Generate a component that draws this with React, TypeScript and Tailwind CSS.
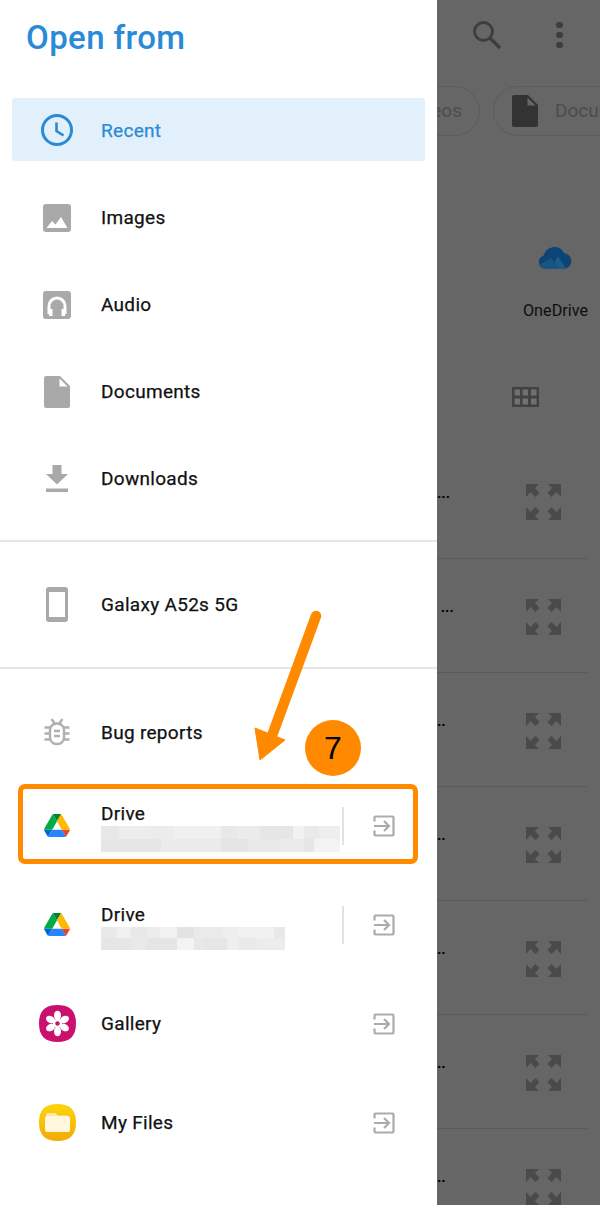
import type { ReactNode } from 'react'

const blurOne: [number, string][][] = [
  [[18, 'bg-[#e8e8e8]'], [29, 'bg-[#ededed]'], [25, 'bg-[#ececec]'], [48, 'bg-[#f0f0f0]'], [16, 'bg-[#e8e8e8]'], [23, 'bg-[#ebebeb]'], [33, 'bg-[#e6e6e6]'], [11, 'bg-[#f2f2f2]'], [15, 'bg-[#eaeaea]'], [21, 'bg-[#eeeeee]']],
  [[60, 'bg-[#e6e6e6]'], [60, 'bg-[#ebebeb]'], [27, 'bg-[#e4e4e4]'], [32, 'bg-[#e9e9e9]'], [24, 'bg-[#ebebeb]'], [10, 'bg-[#e6e6e6]'], [26, 'bg-[#f3f3f3]']],
]

const blurTwo: [number, string][][] = [
  [[16, 'bg-[#e9e9e9]'], [14, 'bg-[#f0f0f0]'], [16, 'bg-[#e8e8e8]'], [13, 'bg-[#ececec]'], [17, 'bg-[#f2f2f2]'], [17, 'bg-[#e3e3e3]'], [28, 'bg-[#eaeaea]'], [17, 'bg-[#eeeeee]'], [35, 'bg-[#f1f1f1]'], [11, 'bg-[#e8e8e8]']],
  [[30, 'bg-[#e6e6e6]'], [16, 'bg-[#e9e9e9]'], [30, 'bg-[#e5e5e5]'], [17, 'bg-[#f3f3f3]'], [11, 'bg-[#e8e8e8]'], [22, 'bg-[#e6e6e6]'], [12, 'bg-[#eeeeee]'], [18, 'bg-[#e9e9e9]'], [28, 'bg-[#ececec]']],
]

function BlurredText({ rows, rowClass }: { rows: [number, string][][]; rowClass: string }) {
  return (
    <div className="flex flex-col">
      {rows.map((row, i) => (
        <div key={i} className={`flex ${rowClass}`}>
          {row.map(([w, color], j) => (
            <div key={j} className={color} style={{ width: w }} />
          ))}
        </div>
      ))}
    </div>
  )
}

function ClockIcon() {
  return (
    <svg width="34" height="34" viewBox="0 0 34 34" fill="none" stroke="#2a8ad6" strokeWidth="3">
      <circle cx="17" cy="17" r="14.5" />
      <path d="M16.5 9.5v8.5l7 4.5" strokeWidth="2.6" />
    </svg>
  )
}

function ImageIcon() {
  return (
    <svg width="28" height="28" viewBox="0 0 28 28">
      <rect width="28" height="28" rx="3" fill="#a9a9a9" />
      <path d="M3.5 24l5.5-7 3.5 3.5L18 13l6.5 11z" fill="#fff" />
    </svg>
  )
}

function AudioIcon() {
  return (
    <svg width="28" height="28" viewBox="0 0 28 28">
      <rect width="28" height="28" rx="3" fill="#a9a9a9" />
      <path d="M6 23v-8a8 8 0 0 1 16 0v8" fill="none" stroke="#fff" strokeWidth="3" />
      <rect x="6" y="18" width="3.5" height="7" fill="#fff" />
      <rect x="18.5" y="18" width="3.5" height="7" fill="#fff" />
    </svg>
  )
}

function DocIcon({ fill = '#a9a9a9', fold = '#fff' }: { fill?: string; fold?: string }) {
  return (
    <svg width="26" height="32" viewBox="0 0 26 32">
      <path d="M2 0h14l10 10v20a2 2 0 0 1-2 2H2a2 2 0 0 1-2-2V2a2 2 0 0 1 2-2z" fill={fill} />
      <path d="M15.5 2.5L23.5 10.5H15.5z" fill={fold} />
    </svg>
  )
}

function DownloadIcon() {
  return (
    <svg width="22" height="27" viewBox="0 0 22 27" fill="#a9a9a9">
      <path d="M6.5 0h9v9H22L11 19.5 0 9h6.5z" />
      <rect y="23.5" width="22" height="3.5" />
    </svg>
  )
}

function PhoneIcon() {
  return (
    <svg width="22" height="35" viewBox="0 0 22 35">
      <rect width="22" height="35" rx="3" fill="#a9a9a9" />
      <rect x="3" y="5" width="16" height="25" fill="#fff" />
    </svg>
  )
}

function BugIcon() {
  return (
    <svg width="26" height="28" viewBox="0 0 26 28" fill="none" stroke="#b0b0b0" strokeWidth="2.4">
      <rect x="6" y="5.5" width="14" height="20.5" rx="6.5" />
      <path d="M7.5 1l3.5 5M18.5 1L15 6M0.5 9.5h5.5M20 9.5h5.5M0.5 15.5h5.5M20 15.5h5.5M0.5 21.5h5.5M20 21.5h5.5M10 13h6M10 18h6" />
    </svg>
  )
}

function DriveIcon() {
  return (
    <svg width="26" height="23" viewBox="0 0 87.3 78">
      <path d="m6.6 66.85 3.85 6.65c.8 1.4 1.95 2.5 3.3 3.3l13.75-23.8h-27.5c0 1.55.4 3.1 1.2 4.5z" fill="#0066da" />
      <path d="m43.65 25-13.75-23.8c-1.35.8-2.5 1.9-3.3 3.3l-25.4 44a9.06 9.06 0 0 0 -1.2 4.5h27.5z" fill="#00ac47" />
      <path d="m73.55 76.8c1.35-.8 2.5-1.9 3.3-3.3l1.6-2.75 7.65-13.25c.8-1.4 1.2-2.95 1.2-4.5h-27.502l5.852 11.5z" fill="#ea4335" />
      <path d="m43.65 25 13.75-23.8c-1.35-.8-2.9-1.2-4.5-1.2h-18.5c-1.6 0-3.15.45-4.5 1.2z" fill="#00832d" />
      <path d="m59.8 53h-32.3l-13.75 23.8c1.35.8 2.9 1.2 4.5 1.2h50.8c1.6 0 3.15-.45 4.5-1.2z" fill="#2684fc" />
      <path d="m73.4 26.5-12.7-22c-.8-1.4-1.95-2.5-3.3-3.3l-13.75 23.8 16.15 28h27.45c0-1.55-.4-3.1-1.2-4.5z" fill="#ffba00" />
    </svg>
  )
}

function GalleryIcon() {
  return (
    <svg width="37" height="37" viewBox="0 0 37 37">
      <path d="M18.5 0C31 0 37 6 37 18.5S31 37 18.5 37 0 31 0 18.5 6 0 18.5 0z" fill="#cb0f6f" />
      {[0, 60, 120, 180, 240, 300].map((a) => (
        <ellipse key={a} cx="18.5" cy="10.5" rx="3.5" ry="4.8" fill="#fff" transform={`rotate(${a} 18.5 18.5)`} />
      ))}
      <circle cx="18.5" cy="18.5" r="4.5" fill="#fff" />
      <circle cx="18.5" cy="18.5" r="2.2" fill="#cb0f6f" />
    </svg>
  )
}

function FilesIcon() {
  return (
    <svg width="37" height="37" viewBox="0 0 37 37">
      <defs>
        <linearGradient id="filesBg" x1="0" y1="0" x2="0" y2="1">
          <stop offset="0" stopColor="#fdd50a" />
          <stop offset="1" stopColor="#f0ab08" />
        </linearGradient>
      </defs>
      <path d="M18.5 0C31 0 37 6 37 18.5S31 37 18.5 37 0 31 0 18.5 6 0 18.5 0z" fill="url(#filesBg)" />
      <path d="M7 11a2 2 0 0 1 2-2h7l3 2.5h9a2 2 0 0 1 2 2V14H7z" fill="#fdeaa8" />
      <rect x="6" y="12" width="25" height="16" rx="2" fill="#fff6dc" />
    </svg>
  )
}

function ExitIcon() {
  return (
    <svg width="22" height="22" viewBox="0 0 22 22" fill="none" stroke="#ababab" strokeWidth="2.2">
      <path d="M1.5 6.5V2.5a1 1 0 0 1 1-1h17a1 1 0 0 1 1 1v17a1 1 0 0 1-1 1h-17a1 1 0 0 1-1-1v-4" />
      <path d="M1 11h15M11 6l5 5-5 5" />
    </svg>
  )
}

function ExpandIcon() {
  return (
    <svg width="35" height="36" viewBox="0 0 35 36" fill="#4a4a4a">
      <path d="M0 0h13L9 4l4.500 5-4 4L4.500 8 0 13z" />
      <path d="M35 0H22l4 4-4.500 5 4 4 5-5 4.500 5z" />
      <path d="M0 36h13l-4-4 4.500-5-4-4-5 5L0 23z" />
      <path d="M35 36H22l4-4-4.500-5 4-4 5 5 4.500-5z" />
    </svg>
  )
}

function MenuRow({ icon, label, active }: { icon: ReactNode; label: string; active?: boolean }) {
  return (
    <div className={active ? 'h-[88px] px-3 pt-3 pb-[13px]' : 'h-[87px] p-3'}>
      <div className={`flex h-full items-center rounded-[3px] ${active ? 'bg-[#e2f0fb] text-[#2a8ad6]' : 'text-[#111]'}`}>
        <div className="flex w-[90px] shrink-0 justify-center">{icon}</div>
        <span className={`-ml-px text-[19px] leading-none tracking-[0.3px] [-webkit-text-stroke:0.25px] ${active ? 'mt-px' : ''}`}>{label}</span>
      </div>
    </div>
  )
}

function AppRow({ icon, label, sub }: { icon: ReactNode; label: string; sub?: ReactNode }) {
  return (
    <div className="ml-3 mr-[13px] flex h-[99px] items-center">
      <div className="flex w-[90px] shrink-0 justify-center">{icon}</div>
      <div className={`-ml-px min-w-0 flex-1 text-[#111] ${sub ? 'mt-[3px]' : ''}`}>
        <div className="text-[19px] leading-[24px] tracking-[0.3px] [-webkit-text-stroke:0.25px]">{label}</div>
        {sub}
      </div>
      {sub && <div className="h-[38px] w-[2px] bg-[#e2e2e2]" />}
      <div className="flex w-[80px] shrink-0 justify-center">
        <ExitIcon />
      </div>
    </div>
  )
}

function BackdropRow({ dots, first }: { dots: string; first?: boolean }) {
  return (
    <div className={`mr-[13px] flex h-[114px] items-center ${first ? '' : 'border-t border-[#5a5a5a]'}`}>
      <span className="mb-[17px] whitespace-pre text-[15px] font-bold leading-[18px] text-black">{dots}</span>
      <div className="ml-auto mr-[26px] mt-[2px]">
        <ExpandIcon />
      </div>
    </div>
  )
}

export default function App() {
  return (
    <div className="relative flex h-[1205px] w-[600px] overflow-hidden font-['Roboto',sans-serif]">
      <aside className="flex w-[437px] shrink-0 flex-col bg-white">
        <div className="h-[86px] pb-[11px]">
          <h1 className="flex h-full items-center pl-[26px] text-[33px] font-medium tracking-[0.4px] text-[#2a8ad6]">Open from</h1>
        </div>
        <MenuRow icon={<ClockIcon />} label="Recent" active />
        <MenuRow icon={<ImageIcon />} label="Images" />
        <MenuRow icon={<AudioIcon />} label="Audio" />
        <MenuRow icon={<DocIcon />} label="Documents" />
        <MenuRow icon={<DownloadIcon />} label="Downloads" />
        <div className="mt-[18px] h-[2px] bg-[#e6e6e6]" />
        <div className="flex h-[125px] items-center">
          <div className="w-full">
            <MenuRow icon={<PhoneIcon />} label="Galaxy A52s 5G" />
          </div>
        </div>
        <div className="h-[2px] bg-[#e6e6e6]" />
        <div className="flex h-[107px] items-center pt-[19px]">
          <div className="w-full">
            <MenuRow icon={<BugIcon />} label="Bug reports" />
          </div>
        </div>
        <AppRow icon={<DriveIcon />} label="Drive" sub={<BlurredText rows={blurOne} rowClass="h-[13px]" />} />
        <AppRow icon={<DriveIcon />} label="Drive" sub={<BlurredText rows={blurTwo} rowClass="h-[11.5px]" />} />
        <AppRow icon={<GalleryIcon />} label="Gallery" />
        <AppRow icon={<FilesIcon />} label="My Files" />
      </aside>

      <main className="flex-1 overflow-hidden bg-[#666666]">
        <div className="flex h-[70px] items-center pl-[36px]">
          <svg width="28" height="28" viewBox="0 0 28 28" fill="none" stroke="#3d3d3d" strokeWidth="2.8">
            <circle cx="10.500" cy="10.500" r="9" />
            <path d="M17 17l10 10" strokeWidth="3.200" />
          </svg>
          <div className="ml-[55px] flex flex-col gap-[3.500px]">
            <div className="h-[6.500px] w-[6.500px] rounded-full bg-[#3d3d3d]" />
            <div className="h-[6.500px] w-[6.500px] rounded-full bg-[#3d3d3d]" />
            <div className="h-[6.500px] w-[6.500px] rounded-full bg-[#3d3d3d]" />
          </div>
        </div>
        <div className="mt-4 flex h-[50px] gap-[13px]">
          <div className="-ml-[57px] flex w-[100px] shrink-0 items-center justify-end rounded-r-full border border-[#5c5c5c] pr-[17px] text-[19px] text-[#4c4c4c]">Videos</div>
          <div className="flex w-[200px] shrink-0 items-center gap-[17px] rounded-full border border-[#5c5c5c] pl-[18px] text-[19px] text-[#4c4c4c]">
            <DocIcon fill="#333333" fold="#666666" />
            <span>Documents</span>
          </div>
        </div>
        <div className="mt-[109px] ml-[85px] flex w-[67px] flex-col items-center">
          <svg width="35" height="24" viewBox="0 0 35 24">
            <path d="M7 23.500A6.500 6.500 0 0 1 5.500 10.800 11 11 0 0 1 26 8a8 8 0 0 1 2 15.500z" fill="#0b4475" />
            <path d="M13 23.500L20 11l8 12.500z" fill="#1b5c88" />
            <path d="M1 20l12-7 9 10.500H7A6 6 0 0 1 1 20z" fill="#175681" />
          </svg>
          <span className="mt-[33px] whitespace-nowrap text-[16.200px] leading-[18px] text-[#0e0e0e]">OneDrive</span>
        </div>
        <div className="mt-[67px] flex justify-start pl-[75px]">
          <svg width="27" height="20" viewBox="0 0 27 20">
            <rect width="27" height="20" fill="#424242" />
            {[2.5, 10.5, 19].map((x) =>
              [2.5, 11.5].map((y) => <rect key={`${x}-${y}`} x={x} y={y} width="5.500" height="6" fill="#707070" />),
            )}
          </svg>
        </div>
        <div className="mt-[37px]">
          <BackdropRow dots="..." first />
          <BackdropRow dots=" ..." />
          <BackdropRow dots=".." />
          <BackdropRow dots=".." />
          <BackdropRow dots=".." />
          <BackdropRow dots=".." />
          <BackdropRow dots=".." />
        </div>
      </main>

      {/* annotation: arrow, step number, highlight box */}
      <div className="absolute left-[18px] top-[784px] h-[80px] w-[400px] rounded-[7px] border-[5px] border-[#ff8a00]" />
      <div className="absolute left-[305px] top-[720px] flex h-[56px] w-[56px] items-center justify-center rounded-full bg-[#ff8a00] font-['Liberation_Sans',sans-serif] text-[32px] leading-none text-black">7</div>
      <svg className="absolute left-[250px] top-[610px]" width="75" height="155" viewBox="250 610 75 155" fill="#ff8a00">
        <path d="M316 616L273 733" stroke="#ff8a00" strokeWidth="10.500" strokeLinecap="round" fill="none" />
        <path d="M255 728l30 12-25 20z" stroke="#ff8a00" strokeWidth="1" strokeLinejoin="round" />
      </svg>
    </div>
  )
}
